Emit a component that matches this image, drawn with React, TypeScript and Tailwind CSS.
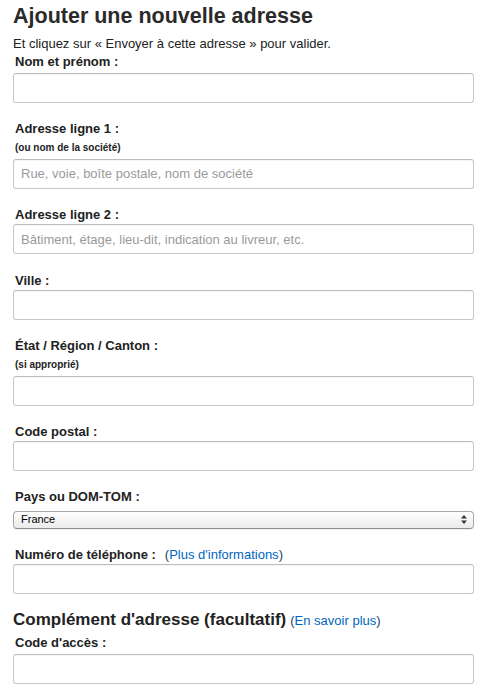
import React from "react";

const inputCls =
  "block w-full h-[30px] rounded-[3px] border border-[#c8c8c8] border-t-[#bdbdbd] bg-white px-[7px] text-[13px] text-[#333] placeholder:text-[#9a9a9a] shadow-[inset_0_1px_1px_rgba(0,0,0,0.04)] outline-none font-['Liberation_Sans',Arial,sans-serif]";

function Label({ children }: { children: React.ReactNode }) {
  return (
    <div className="pl-[2px] pt-[2px] text-[13px] leading-[19px] font-bold text-[#222]">
      {children}
    </div>
  );
}

function SubLabel({ children }: { children: React.ReactNode }) {
  return (
    <div className="pl-[2px] mt-[2.5px] mb-[4px] text-[10px] leading-[14px] font-bold text-[#222]">
      {children}
    </div>
  );
}

export default function App() {
  return (
    <div className="w-[488px] h-[692px] overflow-hidden bg-white pl-[13px] pr-[14px] font-['Liberation_Sans',Arial,sans-serif] text-[#333]">
      <h1 className="pt-[4px] text-[21.5px] leading-[24px] font-bold text-[#2a2a2a]">
        Ajouter une nouvelle adresse
      </h1>
      <p className="mt-[7.4px] -mb-[3px] text-[13px] leading-[18px] text-[#222]">
        Et cliquez sur « Envoyer à cette adresse » pour valider.
      </p>

      <div>
        <Label>Nom et prénom :</Label>
        <input className={inputCls + " mt-[1.5px]"} />
      </div>

      <div className="mt-[14.5px]">
        <Label>Adresse ligne 1 :</Label>
        <SubLabel>(ou nom de la société)</SubLabel>
        <input
          className={inputCls}
          placeholder="Rue, voie, boîte postale, nom de société"
        />
      </div>

      <div className="mt-[14.5px]">
        <Label>Adresse ligne 2 :</Label>
        <input
          className={inputCls}
          placeholder="Bâtiment, étage, lieu-dit, indication au livreur, etc."
        />
      </div>

      <div className="mt-[14.5px]">
        <Label>Ville :</Label>
        <input className={inputCls} />
      </div>

      <div className="mt-[14.5px]">
        <Label>État / Région / Canton :</Label>
        <SubLabel>(si approprié)</SubLabel>
        <input className={inputCls} />
      </div>

      <div className="mt-[14.5px]">
        <Label>Code postal :</Label>
        <input className={inputCls} />
      </div>

      <div className="mt-[14px]">
        <Label>Pays ou DOM-TOM :</Label>
        <div className="relative mt-[5px] h-[17.5px] w-full rounded-[4px] border border-[#a8a8a8] border-b-[#8f8f8f] bg-gradient-to-b from-white to-[#ebebeb] shadow-[0_1px_0_rgba(0,0,0,0.06)]">
          <div className="pl-[7px] text-[11px] leading-[15.5px] text-black">
            France
          </div>
          <svg
            className="absolute right-[6px] top-[3px]"
            width="6"
            height="9"
            viewBox="0 0 6 9"
          >
            <path d="M3 0 L6 3.5 L0 3.5 Z" fill="#333" />
            <path d="M0 5.5 L6 5.5 L3 9 Z" fill="#333" />
          </svg>
        </div>
      </div>

      <div className="mt-[14px]">
        <div className="pl-[2px] pt-[2px] text-[13px] leading-[19px] text-[#222]">
          <span className="font-bold">Numéro de téléphone :</span>
          <span className="ml-[9px] text-[#1d3f66]">(</span>
          <span className="text-[#0066c0]">Plus d'informations</span>
          <span className="text-[#1d3f66]">)</span>
        </div>
        <input className={inputCls + " mt-[0.5px]"} />
      </div>

      <div className="mt-[15px] -mb-[3.5px] text-[17px] leading-[22px] font-bold text-[#222]">
        Complément d'adresse (facultatif)
        <span className="ml-[4px] text-[13px] font-normal">
          <span className="text-[#1d3f66]">(</span>
          <span className="text-[#0066c0]">En savoir plus</span>
          <span className="text-[#1d3f66]">)</span>
        </span>
      </div>

      <div className="mt-[2.5px]">
        <Label>Code d'accès :</Label>
        <input className={inputCls + " mt-[2px]"} />
      </div>
    </div>
  );
}
